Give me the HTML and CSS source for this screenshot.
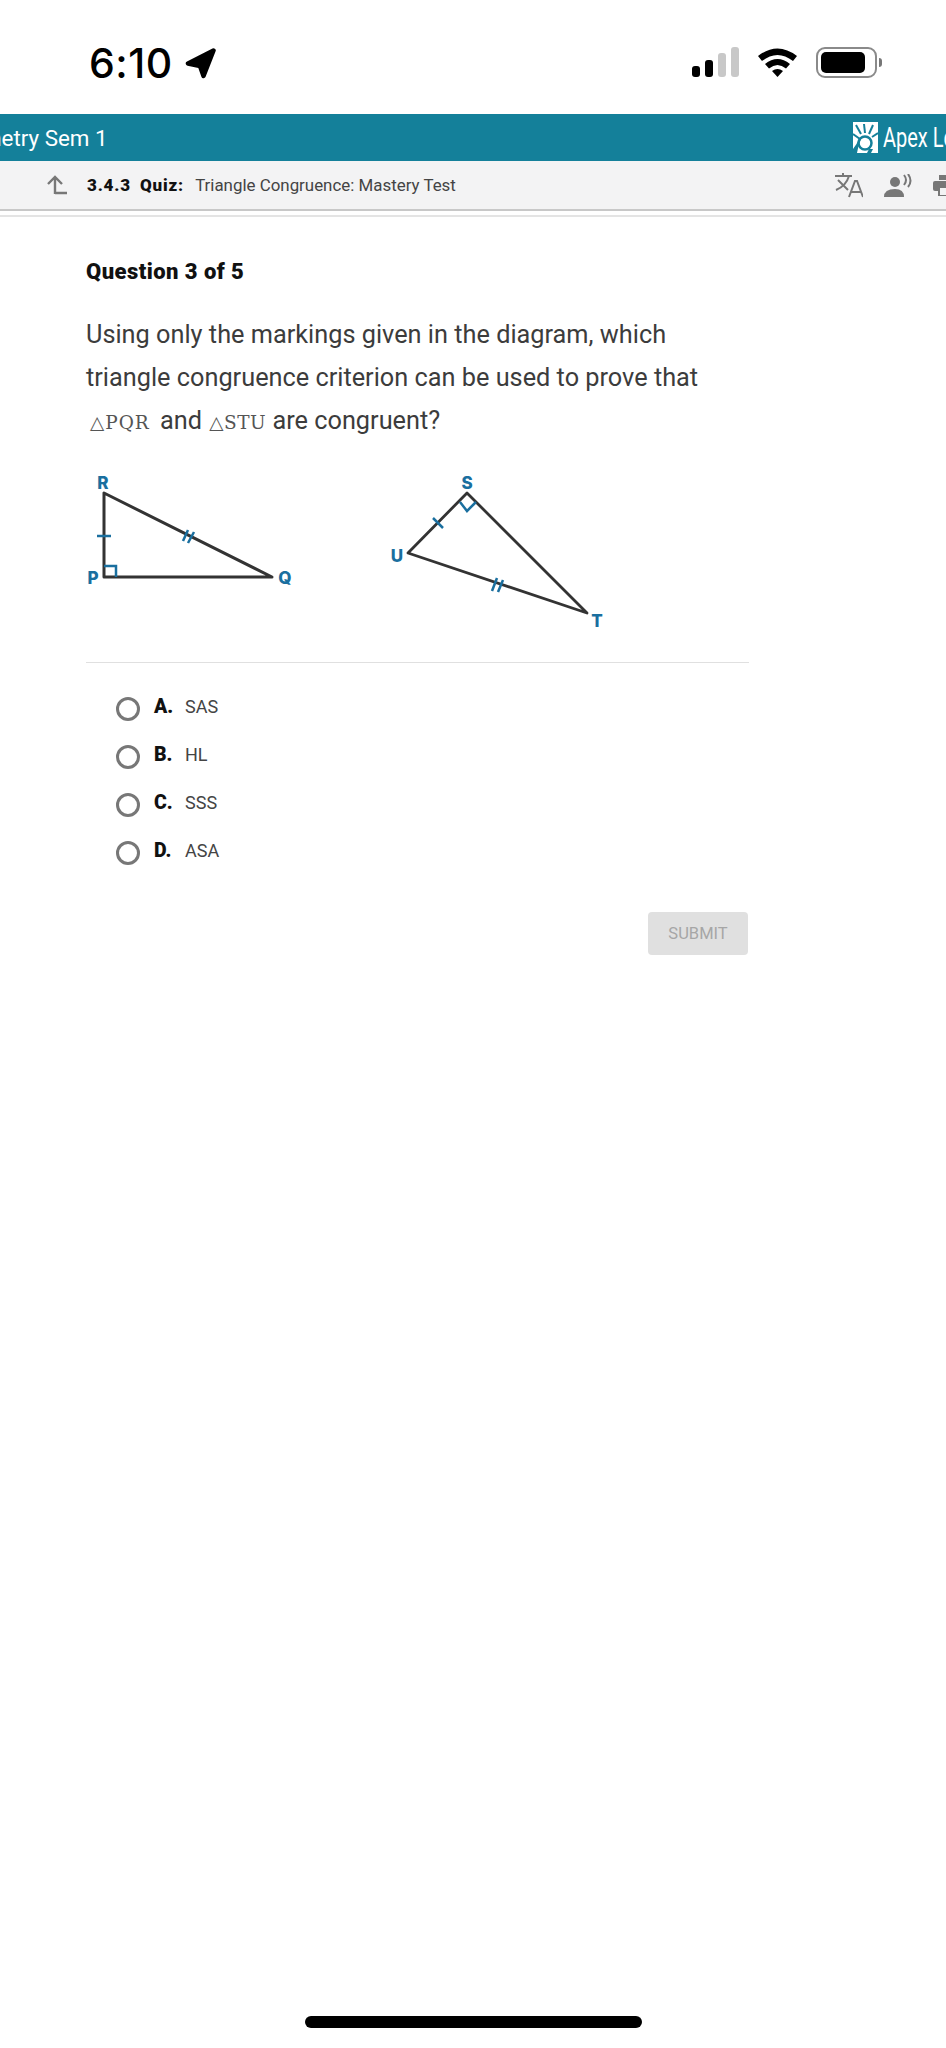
FILE: index.html
```html
<!DOCTYPE html>
<html lang="en">
<head>
    <meta charset="UTF-8">
    <meta name="viewport" content="width=device-width, initial-scale=1.0">
    <title>Triangle Congruence: Mastery Test</title>
    <link rel="stylesheet" href="styles.css">
</head>
<body>

    <div class="status-bar">
        <div class="status-time">
            <span>6:10</span>
            <svg class="location-icon" width="32" height="32" viewBox="0 0 32 32">
                <path d="M28.5 3.5 L3 16.5 L15 19 L18.5 29 Z" fill="#000" stroke="#000" stroke-width="4.5" stroke-linejoin="round"/>
            </svg>
        </div>
        <div class="status-icons">
            <div class="signal">
                <span class="signal-bar bar-1"></span>
                <span class="signal-bar bar-2"></span>
                <span class="signal-bar bar-3"></span>
                <span class="signal-bar bar-4"></span>
            </div>
            <svg class="wifi" width="41" height="30" viewBox="0 0 41 30">
                <path d="M1 9 Q20.5 -6 40 9 L36 14 Q20.5 2 5 14 Z" fill="#000"/>
                <path d="M8 17 Q20.5 7 33 17 L29 21.5 Q20.5 14.5 12 21.5 Z" fill="#000"/>
                <path d="M15 24 Q20.5 20 26 24 L20.5 30 Z" fill="#000"/>
            </svg>
            <div class="battery">
                <div class="battery-level"></div>
            </div>
            <span class="battery-nub"></span>
        </div>
    </div>

    <div class="course-bar">
        <span class="course-name">Geometry Sem 1</span>
        <div class="brand">
            <svg class="brand-logo" width="25" height="31" viewBox="0 0 25 31">
                <rect width="25" height="31" fill="#fff"/>
                <g stroke="#14809a" stroke-width="2" fill="none">
                    <path d="M3 3 L8 12"/>
                    <path d="M11 2 L12 11"/>
                    <path d="M20 3 L16 12"/>
                    <path d="M25 11 L19 15"/>
                    <path d="M0 12 L7 17"/>
                </g>
                <circle cx="12" cy="21" r="6.5" fill="none" stroke="#14809a" stroke-width="2.5"/>
                <path d="M0 27 Q4 22 6 17 L8 17 Q5 24 4 31 L0 31 Z" fill="#14809a"/>
                <path d="M16 27 L20 27 L18 31 L14 31 Z" fill="#14809a"/>
            </svg>
            <span class="brand-name">Apex Learning</span>
        </div>
    </div>

    <div class="activity-bar">
        <svg class="back-icon" width="22" height="20" viewBox="0 0 22 20">
            <path d="M9 19 L9 3 M2 9 L9 2 L16 9 M9 18 L21 18" fill="none" stroke="#777" stroke-width="2.4"/>
        </svg>
        <div class="activity-title">
            <strong>3.4.3</strong>
            <strong>Quiz:</strong>
            <span class="activity-name">Triangle Congruence: Mastery Test</span>
        </div>
        <div class="activity-tools">
            <svg width="28" height="25" viewBox="0 0 28 25">
                <path d="M0 3 L17 3 M8 0 L8 3 M3 7 L13 17 M14 3 Q11 13 1 17" fill="none" stroke="#777" stroke-width="2"/>
                <path d="M14 24 L20 8 L22 8 L28 24 M16 19 L26 19" fill="none" stroke="#777" stroke-width="2"/>
            </svg>
            <svg width="28" height="23" viewBox="0 0 28 23">
                <circle cx="11" cy="8" r="5" fill="#777"/>
                <path d="M0 23 Q0 15 11 15 Q20 15 20 23 Z" fill="#777"/>
                <path d="M20 1 Q24 6 20 11 M24 0 Q29 7 24 13" fill="none" stroke="#777" stroke-width="2"/>
            </svg>
            <svg width="30" height="21" viewBox="0 0 30 21">
                <rect x="6" y="0" width="18" height="5" fill="#777"/>
                <rect x="0" y="6" width="30" height="10" rx="2" fill="#777"/>
                <rect x="6" y="12" width="18" height="9" fill="#f3f3f4" stroke="#777" stroke-width="2"/>
            </svg>
        </div>
    </div>
    <div class="activity-rule"></div>

    <div class="question">
        <h2 class="question-count">Question 3 of 5</h2>
        <p class="question-text">
            Using only the markings given in the diagram, which<br>
            triangle congruence criterion can be used to prove that<br>
            <span class="math">△PQR</span> and <span class="math math-second">△STU</span> are congruent?
        </p>

        <svg class="diagram" width="560" height="180" viewBox="70 460 560 180">
            <path d="M104 493 L104 577 L272 577 Z" fill="none" stroke="#333" stroke-width="3" stroke-linejoin="round"/>
            <path d="M467 493 L408 553 L587 613 Z" fill="none" stroke="#333" stroke-width="2.8" stroke-linejoin="round"/>
            <g fill="none" stroke="#1a6f9f" stroke-width="2.5">
                <path d="M104 566 L116 566 L116 577"/>
                <path d="M97 536 L111 536"/>
                <path d="M183 541 L188 530 M188 543 L194 532"/>
                <path d="M460 502 L467 511 L476 502"/>
                <path d="M433 518 L443 528"/>
                <path d="M492 591 L497 578 M498 592 L503 580"/>
            </g>
            <g class="diagram-label">
                <text x="103" y="489">R</text>
                <text x="93" y="584">P</text>
                <text x="285" y="584">Q</text>
                <text x="467" y="489">S</text>
                <text x="397" y="562">U</text>
                <text x="597" y="627">T</text>
            </g>
        </svg>

        <hr class="question-rule">

        <ul class="answers">
            <li class="answer"><span class="radio"></span><strong>A.</strong><span>SAS</span></li>
            <li class="answer"><span class="radio"></span><strong>B.</strong><span>HL</span></li>
            <li class="answer"><span class="radio"></span><strong>C.</strong><span>SSS</span></li>
            <li class="answer"><span class="radio"></span><strong>D.</strong><span>ASA</span></li>
        </ul>

        <div class="actions">
            <button type="button" class="submit" disabled>SUBMIT</button>
        </div>
    </div>

    <div class="home-bar"></div>

</body>
</html>
```

FILE: styles.css
```css
html {
    overflow: hidden;
}

body {
    font-family: 'Roboto', 'Liberation Sans', sans-serif;
    background-color: #fff;
    margin: 0;
    padding: 0;
    width: 946px;
    height: 2048px;
    overflow: hidden;
    display: flex;
    flex-direction: column;
}

/* phone status bar */
.status-bar {
    height: 114px;
    flex: none;
    display: flex;
    justify-content: space-between;
    padding: 40px 64px 0 89px;
    box-sizing: border-box;
}

.status-time {
    display: flex;
    align-items: flex-start;
    gap: 12px;
    font-family: 'Inter', 'Roboto', sans-serif;
    font-size: 41px;
    font-weight: 500;
    line-height: 46px;
    letter-spacing: 0.5px;
    color: #000;
}

.location-icon {
    margin-top: 7px;
}

.status-icons {
    display: flex;
    align-items: flex-start;
    padding-top: 7px;
}

.signal {
    display: flex;
    align-items: flex-end;
    gap: 5px;
    height: 30px;
    margin-right: 18px;
}

.signal-bar {
    display: block;
    width: 8px;
    border-radius: 3px;
    background-color: #000;
}

.bar-1 {
    height: 11px;
}

.bar-2 {
    height: 17px;
}

.bar-3 {
    height: 24px;
    background-color: #c8c8c8;
}

.bar-4 {
    height: 30px;
    background-color: #c8c8c8;
}

.wifi {
    margin-right: 18px;
}

.battery {
    width: 61px;
    height: 31px;
    box-sizing: border-box;
    border: 2px solid #8a8a8a;
    border-radius: 9px;
    padding: 3px;
}

.battery-level {
    width: 44px;
    height: 21px;
    border-radius: 5px;
    background-color: #000;
}

.battery-nub {
    width: 3px;
    height: 9px;
    margin: 11px 0 0 2px;
    border-radius: 0 4px 4px 0;
    background-color: #777;
}

/* teal course bar */
.course-bar {
    height: 47px;
    flex: none;
    display: flex;
    align-items: center;
    justify-content: space-between;
    background-color: #14809a;
    color: #fff;
}

.course-name {
    font-size: 22.4px;
    margin-left: -58px;
    white-space: nowrap;
}

.brand {
    display: flex;
    align-items: center;
    gap: 5px;
    width: 93px;
    flex: none;
    overflow: hidden;
}

.brand-logo {
    flex: none;
}

.brand-name {
    font-size: 27px;
    white-space: nowrap;
    transform: scaleX(0.74);
    transform-origin: left center;
}

/* grey activity bar */
.activity-bar {
    height: 48px;
    flex: none;
    display: flex;
    align-items: center;
    background-color: #f3f3f4;
    border-bottom: 2px solid #c8c8c8;
    padding-left: 46px;
    position: relative;
}

.back-icon {
    margin-right: 19px;
}

.activity-title {
    font-size: 16.9px;
    color: #444;
    white-space: nowrap;
}

.activity-title strong {
    font-weight: 900;
    font-size: 17px;
    letter-spacing: 0.8px;
    color: #111;
    margin-right: 5px;
}

.activity-name {
    margin-left: 2px;
}

.activity-tools {
    display: flex;
    align-items: center;
    gap: 21px;
    margin-left: auto;
    margin-right: -17px;
    flex: none;
}

.activity-rule {
    height: 2px;
    flex: none;
    margin-top: 4px;
    background-color: #e4e4e4;
}

/* question */
.question {
    width: 663px;
    margin-left: 86px;
    padding-top: 42px;
}

.question-count {
    margin: 0;
    font-size: 22px;
    font-weight: 900;
    letter-spacing: 0.45px;
    line-height: 26px;
    color: #111;
}

.question-text {
    margin: 28px 0 0;
    font-size: 25.3px;
    line-height: 43px;
    color: #3c3c3c;
}

.math {
    font-family: 'DejaVu Serif', 'Liberation Serif', serif;
    font-size: 18.5px;
    letter-spacing: 1px;
    color: #555;
    margin: 0 4px;
}

.math-second {
    letter-spacing: 0.5px;
    margin: 0 0 0 1px;
}

.diagram {
    display: block;
    margin: 16px 0 0 -16px;
}

.diagram-label text {
    font-family: 'Inter', sans-serif;
    font-size: 17px;
    font-weight: 800;
    fill: #1a6f9f;
    text-anchor: middle;
}

.question-rule {
    border: none;
    height: 1px;
    margin: 22px 0 0;
    background-color: #e0e0e0;
}

.answers {
    list-style: none;
    margin: 19px 0 0 30px;
    padding: 0;
}

.answer {
    display: flex;
    align-items: center;
    height: 48px;
    font-size: 18px;
    color: #444;
}

.answer strong {
    width: 31px;
    font-size: 19.5px;
    font-weight: 900;
    color: #111;
}

.radio {
    width: 24px;
    height: 24px;
    box-sizing: border-box;
    border: 3px solid #777;
    border-radius: 50%;
    margin: 6px 14px 0 0;
    flex: none;
}

.actions {
    display: flex;
    justify-content: flex-end;
    margin: 38px 1px 0 0;
}

.submit {
    width: 100px;
    height: 43px;
    border: none;
    border-radius: 4px;
    background-color: #e0e0e0;
    color: #a6a6a6;
    font-family: inherit;
    font-size: 16.5px;
}

.home-bar {
    width: 337px;
    height: 12px;
    flex: none;
    margin: auto 0 20px 305px;
    border-radius: 6px;
    background-color: #000;
}
```
